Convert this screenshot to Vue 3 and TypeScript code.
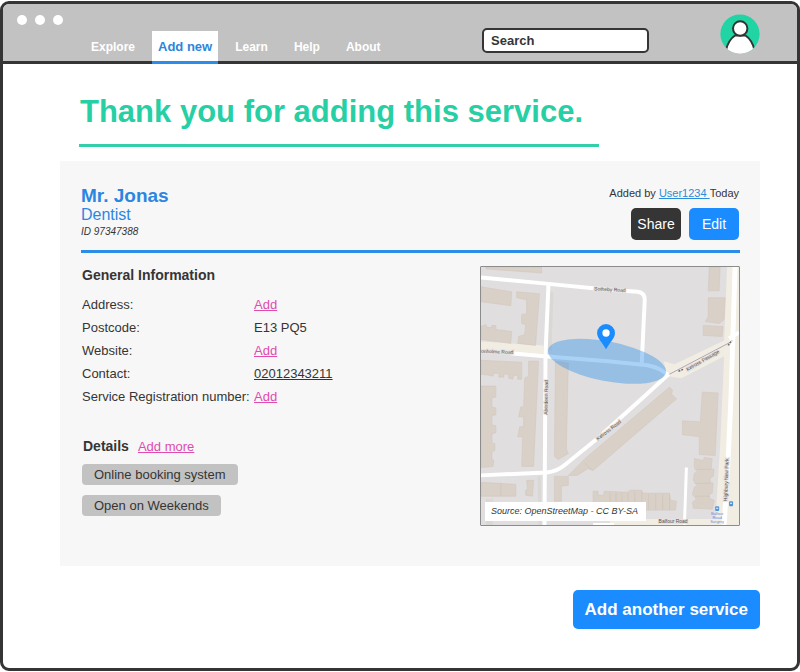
<script setup lang="ts">
import { ref } from 'vue'

interface NavItem {
  label: string
  active?: boolean
}

interface InfoRow {
  label: string
  value: string
  kind: 'add' | 'text' | 'phone'
}

const navItems: NavItem[] = [
  { label: 'Explore' },
  { label: 'Add new', active: true },
  { label: 'Learn' },
  { label: 'Help' },
  { label: 'About' },
]

const infoRows: InfoRow[] = [
  { label: 'Address:', value: 'Add', kind: 'add' },
  { label: 'Postcode:', value: 'E13 PQ5', kind: 'text' },
  { label: 'Website:', value: 'Add', kind: 'add' },
  { label: 'Contact:', value: '02012343211', kind: 'phone' },
  { label: 'Service Registration number:', value: 'Add', kind: 'add' },
]

const tags: string[] = ['Online booking system', 'Open on Weekends']

const buildings: string[] = [
  '5,0 61,0 61,6 5,2',
  '0,20 31,25 30,39 0,35',
  '36,25 59,27 55,79 37,77 38,70 44,68 45,58 41,57 41,48 46,47 46,33 36,31',
  '0,60 5,58 6,61 11,61 11,59 15,59 15,63 31,65 30,77 0,73',
  '0,94 41,96 41,113 37,113 37,109 33,109 32,113 28,112 28,108 23,108 23,111 18,111 18,107 13,107 12,110 8,109 0,108',
  '48,95 58,95 53,201 41,201 42,171 37,171 39,161 43,161 43,151 38,151 40,141 43,141 44,112 48,110',
  '0,120 15,120 15,131 11,132 11,141 15,142 15,149 11,150 11,159 15,160 15,167 11,168 11,177 14,178 14,185 11,186 11,194 13,195 12,201 0,202',
  '75,95 88,97 86,184 88,188 78,194 74,191',
  '0,217 35,219 35,231 0,231',
  '46,215 53,215 52,231 45,230 45,225 47,224',
  '74,211 88,211 88,220 81,221 81,236 74,236',
  '88,210 105,193 190,121 193,124 192,128 197,133 191,138 113,205 108,203 97,210',
  '113,226 118,226 118,230 124,230 124,226 148,227 150,225 162,225 163,228 190,228 191,235 197,236 196,245 113,245',
  '230,0 241,0 240,24 229,24',
  '229,31 246,31 245,53 240,57 226,55 229,50',
  '224,59 244,60 243,70 224,69',
  '223,126 239,127 236,190 220,189 220,171 203,169 203,155 221,156',
  '215,193 224,195 225,192 233,193 232,203 235,204 234,211 231,213 231,217 234,218 233,228 230,229 230,233 235,235 233,244 214,243 213,237 217,234 213,229 215,222 218,220 214,215 215,208 218,205 215,202',
]

const query = ref<string>('')
</script>

<template>
  <div class="window">
    <header class="topbar">
      <div class="dots" aria-hidden="true"><i></i><i></i><i></i></div>
      <nav class="nav">
        <a
          v-for="item in navItems"
          :key="item.label"
          href="#"
          :class="{ active: item.active }"
          >{{ item.label }}</a
        >
      </nav>
      <input v-model="query" class="search" type="search" placeholder="Search" aria-label="Search" />
      <a href="#" class="avatar" aria-label="Profile">
        <svg viewBox="0 0 40 40">
          <clipPath id="avatar-clip"><circle cx="20" cy="20" r="19.6" /></clipPath>
          <g clip-path="url(#avatar-clip)">
            <rect width="40" height="40" fill="#20d4a4" />
            <path
              d="M6 36C7.500 30 10.500 24.500 15 21.500H25.500C30 24.500 33 30 34.500 36V44H6Z"
              fill="#fff"
              stroke="#333"
              stroke-width="2"
            />
            <circle cx="20.200" cy="14.500" r="7.200" fill="#fff" stroke="#333" stroke-width="2" />
            <path d="M4 35.500Q20 33 37 35.500V40H4Z" fill="#fff" />
          </g>
        </svg>
      </a>
    </header>

    <main class="page">
      <h1>Thank you for adding this service.</h1>

      <section class="card">
        <div class="card-head">
          <div>
            <h2 class="name">Mr. Jonas</h2>
            <p class="role">Dentist</p>
            <p class="ident">ID 97347388</p>
          </div>
          <div class="meta">
            <p class="added">Added by <a href="#">User1234&nbsp;</a>Today</p>
            <div class="actions">
              <button type="button" class="btn dark">Share</button>
              <button type="button" class="btn">Edit</button>
            </div>
          </div>
        </div>

        <div class="card-body">
          <div class="info">
            <h3>General Information</h3>
            <dl>
              <template v-for="row in infoRows" :key="row.label">
                <dt>{{ row.label }}</dt>
                <dd>
                  <a v-if="row.kind === 'add'" href="#" class="add">{{ row.value }}</a>
                  <a v-else-if="row.kind === 'phone'" :href="'tel:' + row.value" class="phone">{{ row.value }}</a>
                  <template v-else>{{ row.value }}</template>
                </dd>
              </template>
            </dl>
            <div class="details-head">
              <h3>Details</h3>
              <a href="#" class="add">Add more</a>
            </div>
            <ul class="tags">
              <li v-for="tag in tags" :key="tag">{{ tag }}</li>
            </ul>
          </div>

          <figure class="map">
            <svg viewBox="0 0 260 260" role="img" aria-label="Map of the service location">
              <rect width="260" height="260" fill="#e0dedf" />
              <!-- verges -->
              <g fill="#f1ede2">
                <path d="M0 75L63 79V90L0 87Z" />
                <path d="M248 0H260V260H236L241 180L245 90L202 112L188 110L184 95L195 98L245 74Z" />
                <path d="M130 254H260V260H130Z" />
              </g>
              <path d="M5 234H12V260H5ZM60 210L61 260H58L57 212ZM70 24L67 84H71L73 26Z" fill="#d9d8d5" />
              <g fill="#d9d0c7" stroke="#d0c5bb" stroke-width="0.500">
                <polygon v-for="points in buildings" :key="points" :points="points" />
              </g>
              <path
                d="M20 218V231M104 197L112 205M130 227V245M136 227V245M142 227V245M148 227V245M155 226V245M162 226V245M169 229V245M176 229V245M183 229V245M190 229V245M215 204H232M215 218H231M216 231H231"
                fill="none"
                stroke="#cdc2b8"
                stroke-width="0.600"
              />
              <!-- streets -->
              <g fill="none" stroke="#fff" stroke-width="4" stroke-linejoin="round">
                <path d="M0 10.500L68 17L113 21.500L143 24L158 25Q165 26 165 33L162 97" />
                <path d="M68 17L65 88L64 260" />
                <path d="M30 87L64 90L128 95L168 99Q182 102 188 109" />
                <path d="M189 108L165 130L117 173L85 199Q77 206 66 207L0 210" />
                <path d="M256 0L252 130L249 195L245 260" stroke-width="5" />
                <path d="M207 202L205 260" stroke-width="3" />
                <path d="M250 72L260 66M113 260H134" />
              </g>
              <path d="M190 108L251 76" fill="none" stroke="#9b94aa" stroke-width="0.800" />
              <path d="M249 79l4-5M199 105l5-2" stroke="#71676b" stroke-width="1.500" stroke-dasharray="2 1" />
              <!-- street names -->
              <g class="labels">
                <text transform="translate(114 23.500) rotate(3)">Sotheby Road</text>
                <text transform="translate(0 86.500) rotate(2)">onholme Road</text>
                <text transform="translate(67 149) rotate(-89)">Aberdeen Road</text>
                <text transform="translate(118 175) rotate(-38)">Kelross Road</text>
                <text transform="translate(208 105) rotate(-30)">Kelross Passage</text>
                <text transform="translate(248 236) rotate(-88)">Highbury New Park</text>
                <text x="179" y="258">Balfour Road</text>
              </g>
              <g class="poi">
                <text x="238" y="250">Balfour</text>
                <text x="238" y="254">Road</text>
                <text x="238" y="258">Surgery</text>
              </g>
              <g fill="#4f94da">
                <rect x="236" y="241" width="4" height="5" rx="1" />
                <rect x="250" y="236" width="4" height="5" rx="1" />
                <path d="M237 242.500h2v1h-2zM251 237.500h2v1h-2z" fill="#fff" />
              </g>
              <!-- approximate area and marker -->
              <ellipse cx="127" cy="95" rx="60.500" ry="20" transform="rotate(11 127 95)" fill="#2b8fe8" fill-opacity="0.400" />
              <path d="M126 83C122.500 76 117 72 117 66.500A9 9 0 0 1 135 66.500C135 72 129.500 76 126 83Z" fill="#1a8cff" />
              <circle cx="126" cy="66.500" r="3.700" fill="#fff" />
            </svg>
            <figcaption>Source: OpenStreetMap - CC BY-SA</figcaption>
          </figure>
        </div>
      </section>

      <button type="button" class="btn another">Add another service</button>
    </main>
  </div>
</template>

<style>
body {
  background: #fff;
}
#app {
  padding: 1px 0;
}
</style>

<style scoped>
* {
  box-sizing: border-box;
}

.window {
  min-height: calc(100vh - 2px);
  border: 3px solid #353535;
  border-radius: 9px;
  overflow: hidden;
  background: #fff;
  color: #353535;
  font-family: 'Liberation Sans', Arial, Helvetica, sans-serif;
}

h1,
h2,
h3,
p,
dl,
dd,
ul,
figure {
  margin: 0;
  padding: 0;
}

.topbar {
  display: flex;
  align-items: flex-end;
  height: 60px;
  padding: 0 37px 0 14px;
  border-bottom: 3px solid #353535;
  background: #c2c2c2;
}

.dots {
  display: flex;
  align-self: flex-start;
  gap: 8px;
  padding-top: 11px;
}

.dots i {
  width: 10px;
  height: 10px;
  border-radius: 50%;
  background: #fff;
}

.nav {
  display: flex;
  gap: 26px;
  margin: 0 auto -3px 28px;
}

.nav a {
  height: 33px;
  border-bottom: 3px solid transparent;
  color: #fff;
  font-size: 12px;
  font-weight: 700;
  line-height: 32px;
  text-decoration: none;
  white-space: nowrap;
}

.nav .active {
  margin: 0 -9px;
  padding: 0 6px;
  border-color: #2b8de8;
  background: #fff;
  color: #2b86dc;
  font-size: 13px;
}

.search {
  width: 167px;
  min-width: 80px;
  height: 25px;
  margin: 0 71px 8px 20px;
  padding: 0 7px;
  border: 2px solid #353535;
  border-radius: 5px;
  outline: none;
  background: #fff;
  color: #353535;
  font-family: inherit;
  font-size: 13px;
  font-weight: 700;
  appearance: none;
}

.search::placeholder {
  color: #353535;
  opacity: 1;
}

.avatar {
  flex: none;
  width: 40px;
  height: 40px;
  margin-bottom: 7px;
}

.avatar svg {
  display: block;
}

.page {
  display: flex;
  flex-direction: column;
  padding: 30px 37px 36px 57px;
}

h1 {
  align-self: flex-start;
  margin: 0 0 14px 19px;
  padding: 0 16px 14px 1px;
  border-bottom: 3px solid #33ceaa;
  color: #26cfa4;
  font-size: 31px;
  line-height: 36px;
}

.card {
  padding: 24px 20px 40px 21px;
  background: #f7f7f7;
}

.card-head {
  display: flex;
  align-items: flex-end;
  justify-content: space-between;
  padding-bottom: 10px;
  border-bottom: 3px solid #2b8de8;
}

.name {
  color: #2b86e2;
  font-size: 19px;
  line-height: 21px;
}

.role {
  color: #2b86e2;
  font-size: 16px;
  line-height: 18px;
}

.ident {
  font-size: 10px;
  font-style: italic;
  line-height: 16px;
}

.meta {
  display: flex;
  flex-direction: column;
  align-items: flex-end;
  gap: 8px;
  padding-right: 1px;
}

.added {
  font-size: 11px;
  line-height: 14px;
}

.added a {
  color: #2b8dd8;
}

.actions {
  display: flex;
  gap: 8px;
}

.btn {
  width: 50px;
  height: 32px;
  padding: 0;
  border: 0;
  border-radius: 5px;
  background: #1a8cff;
  color: #fff;
  font-family: inherit;
  font-size: 14px;
}

.btn.dark {
  background: #353535;
}

.card-body {
  display: flex;
  align-items: flex-start;
  justify-content: space-between;
  gap: 20px;
  padding-top: 13px;
}

.info {
  padding-left: 1px;
}

h3 {
  font-size: 14px;
  line-height: 18px;
}

dl {
  display: grid;
  grid-template-columns: 172px auto;
  margin: 9px 0 29px;
  font-size: 13px;
  line-height: 23px;
}

.add {
  color: #e04bb0;
}

.phone {
  color: inherit;
}

.details-head {
  display: flex;
  align-items: baseline;
  gap: 9px;
  padding-left: 1px;
  font-size: 13px;
  line-height: 18px;
}

.tags {
  display: flex;
  flex-direction: column;
  align-items: flex-start;
  gap: 10px;
  margin-top: 8px;
  list-style: none;
}

.tags li {
  padding: 0 12px;
  border-radius: 4px;
  background: #c2c2c2;
  font-size: 13px;
  line-height: 21px;
}

.map {
  position: relative;
  flex: none;
  width: 260px;
  border: 1px solid #8c8c8c;
  border-radius: 1px;
}

.map svg {
  display: block;
}

.labels text {
  fill: #55504f;
  stroke: #e4e1df;
  stroke-width: 2px;
  paint-order: stroke;
  font-size: 5px;
}

.poi text {
  fill: #5b8fe0;
  font-size: 4px;
  text-anchor: middle;
}

.map figcaption {
  position: absolute;
  bottom: 4px;
  left: 4px;
  padding: 0 8px 0 6px;
  background: #fff;
  font-size: 9px;
  font-style: italic;
  line-height: 19px;
  white-space: nowrap;
}

.another {
  align-self: flex-end;
  width: auto;
  height: 39px;
  margin-top: 24px;
  padding: 0 12px;
  font-size: 17px;
  font-weight: 700;
}
</style>
